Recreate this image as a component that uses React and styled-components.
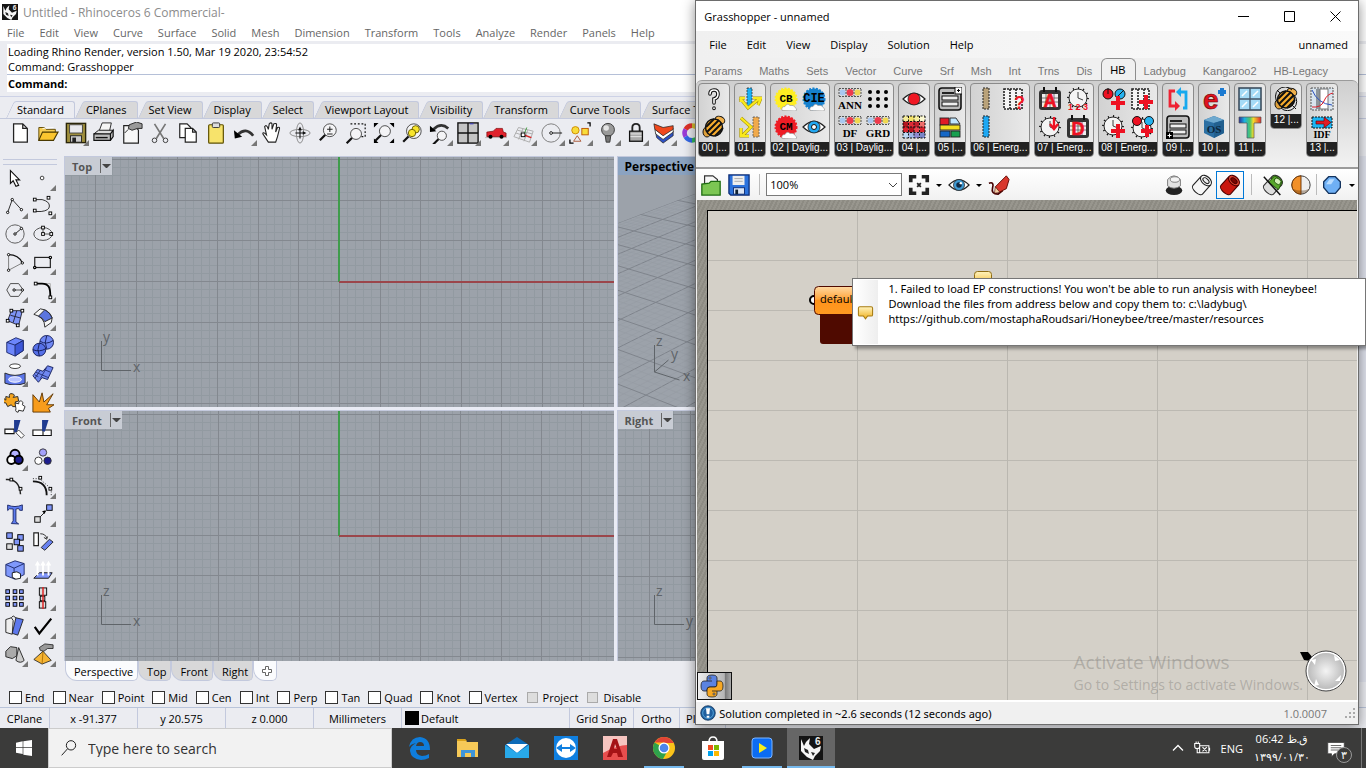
import React from "react"
import styled, { createGlobalStyle, css } from "styled-components"

const ui = `"Open Sans", "Noto Sans", sans-serif`
const wide = `"Noto Sans", "Open Sans", sans-serif`
const classic = `"Liberation Sans", Arial, sans-serif`
const panel = "#ebecf1"
const rule = "#c3c9dd"

const GlobalStyle = createGlobalStyle`
	* {
		box-sizing: border-box;
	}

	body {
		margin: 0;
		overflow: hidden;
		font: 11px/15px ${ ui };
		color: #000;
	}

	button, input, select {
		font: inherit;
		color: inherit;
		margin: 0;
	}

	button {
		padding: 0;
		border: 0;
		background: none;
		white-space: nowrap;
	}
`

/* ---------- small drawing parts ---------- */

const Sq = ( { x, y, fill = "#fff", s = 3 } ) => (
	<rect x={ x - s / 2 } y={ y - s / 2 } width={ s } height={ s } fill={ fill } stroke="#000" />
)

const Dot = ( { x, y } ) => <circle cx={ x } cy={ y } r="1.3" fill="#fff" stroke="#000" />

const Lens = ( { x = 14, y = 9, r = 7 } ) => (
	<g>
		<path d={ `M${ x - r * .7 } ${ y + r * .7 }L${ x - r * .7 - 6 } ${ y + r * .7 + 6 }` } stroke="#111" strokeWidth="2.4" />
		<circle cx={ x } cy={ y } r={ r } fill="#f4f4f6" stroke="#444" />
	</g>
)

const Clock = ( { x = 12, y = 12, r = 9 } ) => (
	<g fill="none" stroke="#111">
		<circle cx={ x } cy={ y } r={ r } fill="#f4f4f4" strokeWidth=".9" />
		<circle cx={ x } cy={ y } r={ r + 1 } strokeWidth="1.8" strokeDasharray="1.2 4" />
		<path d={ `M${ x } ${ y - r + 3 }V${ y }L${ x + 5 } ${ y + 2 }` } strokeWidth=".8" />
	</g>
)

const Plus = ( { x = 17, y = 17, c = "#ee1122", s = 5 } ) => (
	<path d={ `M${ x } ${ y - s }v${ s * 2 }M${ x - s } ${ y }h${ s * 2 }` } stroke={ c } strokeWidth="4" />
)

const Calendar = ( { letter } ) => (
	<g>
		<rect x="1" y="3" width="22" height="20" rx="3" fill="#333" />
		<rect x="4" y="7" width="16" height="13" fill="#eee" />
		<path d="M6 0v5M18 0v5" stroke="#111" strokeWidth="2" />
		<path d="M4 11h16M4 15h16M8 7v13M12 7v13M16 7v13" stroke="#555" strokeWidth=".8" />
		<text x="12" y="20" textAnchor="middle" fontFamily="Liberation Sans" fontWeight="700" fontSize="18" fill="#ee1122" stroke="#ee1122" strokeWidth=".6">{ letter }</text>
	</g>
)

const Ball = ( { letters, c } ) => (
	<g>
		<circle cx="12" cy="12" r="10.5" fill={ c } stroke={ c } strokeWidth="2" strokeDasharray="2 1.4" />
		<text x="12" y="15" textAnchor="middle" fontFamily="Liberation Mono" fontWeight="700" fontSize={ letters.length > 2 ? 12 : 11 }>{ letters }</text>
		<path d="M8 23.500q-1-4 3-4q2-4 5-1q4-1 5 2q3 1 1 3.500z" fill="#fff" stroke="#999" strokeWidth=".7" />
	</g>
)

const Swatches = ( { letters } ) => (
	<g>
		<path d="M1 2h22v7H1z" fill="#ddd" />
		<circle cx="4.500" cy="5.500" r="3" fill="#a9c8f0" />
		<circle cx="12" cy="5.500" r="3.500" fill="#ee3b4d" />
		<circle cx="19.500" cy="5.500" r="3" fill="#f0d850" />
		<path d="M1 1.500h22M1 9.500h22M1 2v7M8 2v7M16 2v7M23 2v7" stroke="#555" strokeDasharray="2 1" fill="none" />
		<text x="12" y="22" textAnchor="middle" fontFamily="Liberation Serif" fontWeight="700" fontSize="11">{ letters }</text>
	</g>
)

const Sheet = ( { badge } ) => (
	<g>
		<rect x="1" y="1" width="22" height="22" rx="3" fill="#bbb" stroke="#111" strokeWidth="1.6" />
		<path d="M4 6h12" stroke="#222" strokeWidth="2" />
		<rect x="4" y="9" width="16" height="4" fill="#eee" stroke="#111" />
		<rect x="4" y="15" width="16" height="4" fill="#eee" stroke="#111" />
		{ badge === "top" ? <g><rect x="17" y="0" width="7" height="7" fill="#fff" stroke="#111" /><path d="M20.500 2v3M19 3.500h3" stroke="#000" /></g> : <g><rect x="0" y="17" width="7" height="7" fill="#000" /><path d="M3.500 18.500v4M1.500 20.500h4" stroke="#fff" /></g> }
	</g>
)

const Bee = ( { ring } ) => (
	<g>
		<ellipse cx="18" cy="5" rx="5" ry="3.500" fill="#f0b04a" stroke="#111" transform="rotate(25 18 5)" />
		<ellipse cx="5" cy="17" rx="4" ry="5" fill="#e0a13a" stroke="#111" />
		<circle cx="12" cy="12.500" r="8.500" fill="#f7ac2e" stroke="#111" strokeWidth="1.500" />
		<path d="M4 12l8-8M5 17L17 5M8 20L20 8M13 21l8-8" stroke="#111" strokeWidth="2" />
		{ ring && <path d="M4 16a9 9 0 0 1 14-13M20 8a9 9 0 0 1-13 13M3 3l3 3M18 18l4 4" fill="none" stroke="#111" /> }
	</g>
)

const Eye = ( { c } ) => (
	<g>
		<path d="M1 12Q12 1 23 12Q12 23 1 12Z" fill="#fff" stroke="#222" strokeWidth="1.200" />
		<circle cx="12" cy="12" r="6" fill={ c } stroke="#222" strokeWidth=".8" />
	</g>
)

const Tile = ( { x, y, w = 6, c = "#7f95f8" } ) => (
	<rect x={ x } y={ y } width={ w } height={ w } fill={ c } stroke="#000" />
)

const Pipe = ( { body, top, hole, line } ) => (
	<g stroke={ line } strokeWidth="1.200" transform="rotate(42 12 12)">
		<path d="M5 6v13a7 3.500 0 0 0 14 0V6" fill={ body } />
		<ellipse cx="12" cy="5.500" rx="7" ry="4.500" fill={ top } />
		<ellipse cx="12" cy="5.500" rx="4" ry="2.200" fill={ hole } />
	</g>
)

const RhinoMark = () => (
	<g>
		<rect width="24" height="24" fill="#141414" />
		<path d="M2 3l3 7 2-4 4-4-1 6 5 5 7-3-1 5-5 5-2 4-6-3-6-6z" fill="#f4f4f4" />
		<path d="M5 12l4 2 1 4-4-2zM12 16l4 1-2 3z" fill="#222" />
		<text x="16" y="9" fontFamily="Liberation Sans" fontWeight="700" fontSize="10" fill="#eee">6</text>
	</g>
)

const CurvePath = "M3 4h6c7 0 9 4 9 14"
const heatColours = [ "#f5ec9a", "#f2e268", "#f6ef9d", "#fbf8d0", "#b3141f", "#e02a36", "#c21f2c", "#ef6d6a", "#d9222e", "#b8121e", "#e8434d", "#d9222e", "#bcd8f4", "#9fb7e8", "#8d8bd0", "#7a86c8" ]

const art = {
	/* Rhino standard toolbar */
	newFile: <path d="M5 2h10l5 5v15H5zM15 2v5h5" fill="#fff" stroke="#222" strokeWidth="1.400" />,
	open: <g><path d="M2 20V6h6l2 2h10v3" fill="#f6cd53" stroke="#5b4500" /><path d="M2 20l4-9h17l-5 9z" fill="#fbc52f" stroke="#4a3900" strokeWidth="1.200" /><path d="M6 7l12-1" stroke="#fff" /></g>,
	save: <g><rect x="1.500" y="1.500" width="21" height="21" fill="#9d8d3c" stroke="#2a2509" strokeWidth="1.500" /><rect x="5" y="3" width="14" height="9" fill="#e9e9ec" stroke="#444" /><rect x="6" y="15" width="12" height="7" fill="#ccc" stroke="#222" /><rect x="8" y="17" width="4" height="5" fill="#222" /></g>,
	print: <g><path d="M7 9l3-8h10l-2 9" fill="#f5f5f5" stroke="#222" /><path d="M1 13l5-4h16l-3 5z" fill="#ddd" stroke="#111" /><path d="M1 13h18v7H1zM19 13l3-4v7l-3 4" fill="#bbb" stroke="#111" strokeWidth="1.300" /><path d="M3 17h13" stroke="#111" strokeWidth="1.500" /></g>,
	props: <g><path d="M3 4h12l4 5v14H3z" fill="#f7f7f7" stroke="#222" strokeWidth="1.300" /><path d="M9 3l8-3 6 2v5h-5l-6 2-4-2z" fill="#999" stroke="#222" /><path d="M8 8l-4 4" stroke="#222" /></g>,
	cut: <g fill="none" stroke="#333"><path d="M6 2l10 16M18 2L8 18" stroke="#777" strokeWidth="1.800" /><circle cx="6" cy="20" r="2.500" /><circle cx="18" cy="20" r="2.500" /></g>,
	copy: <g fill="#fff" stroke="#222" strokeWidth="1.300"><path d="M3 2h8l4 4v11H3z" /><path d="M9 7h8l4 4v11H9zM17 7v4h4" /></g>,
	paste: <g><rect x="4" y="3" width="16" height="20" rx="1" fill="#f7e36b" stroke="#5e5000" strokeWidth="1.300" /><rect x="8" y="1" width="8" height="5" rx="1" fill="#ddd" stroke="#333" /></g>,
	undo: <g><path d="M5 14Q14 5 22 15" fill="none" stroke="#333" strokeWidth="3" /><path d="M1 9l1 9 8-2z" /></g>,
	pan: <path d="M8 22l-6-9q0-3 4 1L4 5q2-3 4 3l1-6q2-2 3 0v6l2-6q3-1 3 1l-1 8 2-5q3-1 2 2l-2 8-2 6z" fill="#fff" stroke="#222" strokeWidth="1.200" />,
	rotate: <g fill="none" stroke="#888"><ellipse cx="12" cy="12" rx="11" ry="4" /><ellipse cx="12" cy="12" rx="4" ry="11" /><path d="M12 8v10M7 12h10" stroke="#111" strokeWidth="1.200" /><path d="M12 5l-2 4h4zM19 12l-4-2v4z" fill="#111" stroke="none" /></g>,
	zoomDyn: <g><Lens /><path d="M11 8h6M14 5v6M11 13h6" stroke="#222" strokeWidth="1.100" /></g>,
	zoomWin: <g><Lens x={ 12 } y={ 13 } r={ 6 } /><path d="M6 2h16v14h-4" fill="none" stroke="#111" strokeDasharray="2 2" strokeWidth="1.300" /></g>,
	zoomExt: <g><Lens x={ 13 } y={ 10 } r={ 6 } /><path d="M1 1h5l-5 5zM23 1v5l-5-5zM1 23v-5l5 5zM23 23h-5l5-5z" /></g>,
	zoomSel: <g><Lens x={ 14 } y={ 10 } r={ 8 } /><circle cx="16" cy="8" r="4" fill="#f8e52c" stroke="#675b00" /><circle cx="12" cy="12" r="4" fill="#f8e52c" stroke="#675b00" /></g>,
	undoView: <g><Lens x={ 14 } y={ 15 } r={ 5 } /><path d="M5 8q8-8 16-1" fill="none" stroke="#333" strokeWidth="3" /><path d="M1 4v7l7-1z" /></g>,
	viewports: <g><rect x="1" y="1" width="22" height="22" fill="#c4c4c4" stroke="#111" strokeWidth="1.500" /><path d="M12 1v22M1 12h22" stroke="#111" strokeWidth="1.500" /><path d="M14 2h4" stroke="#33c" /></g>,
	car: <g><path d="M0 17h24" stroke="#bbb" /><path d="M2 11l7-1 3-3h7l1 4 3 1v4H2z" fill="#e0222d" stroke="#700" strokeWidth=".7" /><circle cx="6" cy="16" r="2.200" /><circle cx="18" cy="16" r="2.200" /></g>,
	cplane: <g fill="none" stroke="#aaa"><path d="M6 6l16 4-4 12L1 16zM5 9l16 4M3 12l16 5M11 7L6 19M16 9l-4 12" /><path d="M12 14l3-8" stroke="#393" /><path d="M12 14l8 3" stroke="#d22" strokeWidth="1.500" /><rect x="9" y="12" width="4" height="4" fill="#fff" stroke="#000" /></g>,
	circleSet: <g fill="none" stroke="#777"><circle cx="11" cy="12" r="10" /><path d="M12 12h11" stroke="#111" /><circle cx="11" cy="12" r="1.500" fill="#fff" stroke="#111" /></g>,
	select: <g><circle cx="7" cy="9" r="4" fill="#f8dc3a" stroke="#c80" /><rect x="14" y="7" width="7" height="7" fill="#f8dc3a" stroke="#b50" /><path d="M9 15l4 6H5z" fill="none" stroke="#a53" /><path d="M20 1h3v4M1 19v4h4" stroke="#000" fill="none" strokeWidth="1.400" /></g>,
	bulb: <g><circle cx="12" cy="8.500" r="7" fill="#999" stroke="#333" /><path d="M9 15h6l-1 7h-4z" fill="#777" stroke="#333" /><circle cx="10" cy="6.500" r="3" fill="#e5e5e5" /></g>,
	lock: <g><path d="M8 11V6q0-4 4-4t4 4v5" fill="none" stroke="#222" strokeWidth="2" /><rect x="5" y="10" width="14" height="11" fill="#aaa" stroke="#111" strokeWidth="1.400" /><path d="M6 13h12M6 16h12" stroke="#eee" /></g>,
	layers: <g stroke="#222" strokeWidth=".8"><path d="M3 12l8 6 11-8v5l-11 8-7-6z" fill="#2e51c4" /><path d="M2 8l9 6 11-7v4l-11 8-8-6z" fill="#fff" /><path d="M1 2l10 4 11-2v4l-11 7-9-7z" fill="#f0481d" /></g>,
	wheel: <g fill="none" strokeWidth="5"><path d="M12 4a8 8 0 0 1 7 4" stroke="#d8c030" /><path d="M5 8a8 8 0 0 1 7-4" stroke="#e0322a" /><path d="M5 16a8 8 0 0 1 0-8" stroke="#9b3bd8" /><path d="M12 20a8 8 0 0 1-7-4" stroke="#3468e8" /><path d="M12 20a8 8 0 0 0 7-12" stroke="#30b860" /></g>,

	/* Rhino side toolbar */
	pointer: <path d="M7 4v14l3-3 3 6 3-1-3-6h4z" fill="#fff" stroke="#111" strokeWidth="1.200" />,
	point: <circle cx="11" cy="12" r="2" fill="#fff" stroke="#333" />,
	polyline: <g fill="none" stroke="#222"><path d="M4 19L9 5l10 11" /><Dot x={ 4 } y={ 19 } /><Dot x={ 9 } y={ 5 } /><Dot x={ 19 } y={ 16 } /></g>,
	curve: <g fill="none" stroke="#222"><path d="M3 5h8q8 2 8 7t-9 6H3" /><Sq x={ 3 } y={ 5 } /><Sq x={ 18 } y={ 3 } /><Sq x={ 3 } y={ 17 } /><Sq x={ 20 } y={ 20 } /></g>,
	circle: <g fill="none" stroke="#555"><circle cx="12" cy="12" r="10" /><path d="M12 12l7-6" stroke="#111" /><Dot x={ 12 } y={ 12 } /><Dot x={ 19 } y={ 6 } /></g>,
	ellipse: <g fill="none" stroke="#444"><ellipse cx="12" cy="12" rx="10" ry="7" /><path d="M12 5v7h9" /><Sq x={ 12 } y={ 5 } /><Sq x={ 12 } y={ 12 } /><Sq x={ 21 } y={ 12 } /></g>,
	arc: <g fill="none" stroke="#777"><path d="M5 21V4M5 21l15-8" /><path d="M5 4q11 0 15 9" stroke="#111" strokeWidth="1.400" /><Dot x={ 5 } y={ 4 } /><Dot x={ 5 } y={ 21 } /><Dot x={ 20 } y={ 13 } /></g>,
	rect: <g fill="none" stroke="#222" strokeWidth="1.300"><rect x="3" y="7" width="17" height="11" /><Dot x={ 20 } y={ 7 } /><Dot x={ 3 } y={ 18 } /></g>,
	polygon: <g fill="none" stroke="#444"><path d="M7 5h9l5 7-5 7H7l-4-7z" /><path d="M11 12h9" /><Dot x={ 11 } y={ 12 } /><Dot x={ 20 } y={ 12 } /></g>,
	fillet: <g fill="none"><path d="M8 5h12v9" stroke="#aaa" /><path d={ CurvePath } stroke="#000" strokeWidth="2" transform="translate(2 1)" /><Sq x={ 4 } y={ 5 } /><Sq x={ 20 } y={ 20 } /></g>,
	surfPts: <g stroke="#223"><path d="M8 4h12l-4 16L4 15z" fill="#7f95f8" /><path d="M14 4l-4 13M7 9l11 3" /><Sq x={ 8 } y={ 4 } /><Sq x={ 20 } y={ 4 } /><Sq x={ 4 } y={ 15 } /><Sq x={ 15 } y={ 20 } /></g>,
	loft: <g stroke="#222"><path d="M2 8l7-6q10 1 13 10l-1 5-7 5q0-11-12-14z" fill="#f6f6f6" /><path d="M7 10l7-7q6 3 8 9l-8 4q-2-4-7-6z" fill="#5b75df" /></g>,
	box: <g stroke="#1b2768"><path d="M3 8l10-5 8 3v11l-9 6-9-4z" fill="#6c86fb" /><path d="M3 8l9 3 9-5" fill="none" /><path d="M12 11v12l9-6V6z" fill="#3d57d8" /></g>,
	spheres: <g stroke="#111a55"><circle cx="16" cy="8" r="7.500" fill="#7088f4" /><path d="M9 7q7 4 14-1M16 1q-3 7 0 14" fill="none" /><circle cx="8" cy="16" r="7" fill="#5670e8" /><path d="M1 16q7 3 14-1M8 9q-3 7 0 14" fill="none" /></g>,
	cylinder: <g><ellipse cx="12" cy="3.500" rx="6" ry="2.500" fill="#fff" stroke="#333" /><path d="M1 11q11 5 22 0v11q-11 4-22 0z" fill="#5b75e8" stroke="#222" /><ellipse cx="12" cy="18" rx="7" ry="3" fill="#b9c4ff" stroke="#fff" /></g>,
	mesh: <g stroke="#16205c"><path d="M1 14l5-7 6 2 5-6 6 2-6 13-6-2-4 5z" fill="#7088f0" /><path d="M3 17l6-9M9 17l7-12M4 10l14 6M3 13l4 2M13 7l7 3" fill="none" strokeWidth=".8" /></g>,
	puzzle: <g stroke="#222"><path d="M2 6l4 1q-1-5 3-4t1 4l5-1 1 5-4 1q3 4 0 5t-4-2l-4 2-2-4q-4 0-3-3t3 0z" fill="#f5a51f" /><path d="M12 13l4 1q0-4 3-3t1 4l3 2-2 5-5-1q0 3-2 2t-1-4z" fill="#fff" /></g>,
	explode: <path d="M1 4l7 8 3-10 2 10L23 3l-7 12 8 0-6 4 2 4H1z" fill="#f79c1c" stroke="#5d3500" />,
	trim: <g stroke="#111" strokeWidth="1.200"><path d="M1 11h10v5H1z" fill="#fff" /><path d="M11 1h7l-4 14-3-1z" fill="#1f3b90" stroke="none" /><path d="M13 15l3-3 6 6-3 3z" fill="#fff" strokeWidth=".8" /></g>,
	split: <g stroke="#111" strokeWidth="1.200"><path d="M1 12h20v6H1z" fill="#fff" /><path d="M12 18v-6" /><path d="M11 1h7l-4 13-3-1z" fill="#1f3b90" stroke="none" /></g>,
	group: <g stroke="#000" strokeWidth="2"><circle cx="12" cy="8" r="5" fill="#b3b1ff" /><circle cx="8" cy="14" r="4.500" fill="#fff" /><circle cx="16" cy="14" r="4.500" fill="#1d1d8e" /></g>,
	ungroup: <g stroke="#333"><circle cx="12" cy="6" r="4" fill="#a4a1fb" /><circle cx="7" cy="15" r="4" fill="#fff" /><circle cx="17" cy="15" r="4" fill="#1d1d8e" /></g>,
	editPts: <g fill="none" stroke="#222"><path d="M2 5q15-1 16 16" strokeWidth="1.600" /><Sq x={ 8 } y={ 5 } /><Sq x={ 18 } y={ 15 } /></g>,
	ctrlPts: <g fill="none" stroke="#111"><path d="M1 7q15 0 15 15" strokeWidth="2" /><path d="M1 4h7l13 11v8" strokeDasharray="1 2" /><Sq x={ 9 } y={ 3 } /><Sq x={ 20 } y={ 15 } /></g>,
	text: <path d="M4 2q8 3 16-1v6h-3l-1-2-3 1v14l3 2H8l2-3V6L6 6 4 8z" fill="#5d7cf0" stroke="#1b2768" transform="skewY(3)" />,
	move: <g><path d="M9 15l6-6" stroke="#111" /><path d="M15 8l-4 1 3 3z" /><Tile x={ 3 } y={ 15 } c="#ddd" /><Tile x={ 16 } y={ 2 } /></g>,
	array: <g><Tile x={ 3 } y={ 2 } /><Tile x={ 15 } y={ 4 } /><Tile x={ 11 } y={ 9 } /><Tile x={ 3 } y={ 14 } c="#ddd" /><Tile x={ 15 } y={ 16 } /></g>,
	orient: <g stroke="#222"><path d="M2 2h5v14H2z" fill="#fff" strokeWidth="1.300" /><path d="M9 3q6 0 7 5m-3-1l3 2 1-3" fill="none" /><path d="M10 18L19 9l4 3-9 9z" fill="#6780ef" /></g>,
	boolean: <g stroke="#1b2768"><path d="M2 6l10-4 10 3v12l-10 5-10-4z" fill="#7f98fb" /><path d="M2 6l9 4 11-5M11 10v12" fill="none" /><path d="M9 15l5-1 4 2v5l-5 1-4-2z" fill="#fff" stroke="#111" /></g>,
	extrude: <g><path d="M2 21l6-6h14l-4 6z" fill="#7f95f8" stroke="#111" /><path d="M6 18V5M12 18V5M18 18V5" stroke="#fff" strokeWidth="2" /><path d="M6 2l-3 5h6zM12 2L9 7h6zM18 2l-3 5h6z" fill="#fff" /></g>,
	grid9: <g>{ [ 2, 10, 17 ].map( x => [ 3, 10, 17 ].map( y => <Tile key={ `${ x }-${ y }` } x={ x } y={ y } w={ 4 } /> ) ) }</g>,
	align: <g><Tile x={ 8 } y={ 1 } w={ 8 } c="#ddd" /><Tile x={ 9 } y={ 10 } w={ 5 } c="#ddd" /><Tile x={ 8 } y={ 16 } w={ 7 } c="#ddd" /><path d="M12 0v24" stroke="#d22" strokeWidth="1.600" /></g>,
	bend: <g stroke="#222"><path d="M2 5l6-2 2 3-1 15-7-2z" fill="#eee" /><path d="M13 3l8 2-6 17-6-2z" fill="#5d78ec" /><path d="M8 3l2-2 3 2" fill="none" /></g>,
	check: <path d="M3 13l5 7L21 4" fill="none" stroke="#000" strokeWidth="2.400" />,
	solids: <g stroke="#222"><path d="M2 9l5-5 7 1v9l-5 3-7-2z" fill="#aaa" /><path d="M16 5l6 14q-4 4-9 0z" fill="#ccc" /></g>,
	hand: <g stroke="#222" strokeWidth=".9"><path d="M12 9l9 10-10 4-9-5z" fill="#f6b535" /><path d="M12 9l-1 14" stroke="#a66a00" /><path d="M8 5l6-4 9 1v4h-6l-4 3-4-1z" fill="#999" /></g>,

	/* Grasshopper ribbon */
	help: <g fill="none" strokeLinecap="round"><path d="M8 7q0-4 4-4t4 4-4 5v4M12 21v.5" stroke="#111" strokeWidth="3.600" /><path d="M8 7q0-4 4-4t4 4-4 5v4M12 21v.5" stroke="#fff" strokeWidth="1.600" /></g>,
	bee: <Bee />,
	beeRing: <Bee ring />,
	down: <g><rect x="9" y="1" width="5" height="18" fill="#1ab0f5" stroke="#333" strokeWidth=".8" strokeDasharray="2 1" /><path d="M2 11l8 10L22 11M15 11h8l-3 7M3 15v-4h4" fill="none" stroke="#a89500" strokeWidth="3.200" /><path d="M2 11l8 10L22 11M15 11h8l-3 7M3 15v-4h4" fill="none" stroke="#fae91c" strokeWidth="2.200" /></g>,
	side: <g><rect x="15" y="2" width="6" height="20" fill="#f0a94b" stroke="#555" strokeWidth=".8" strokeDasharray="2 1" /><path d="M3 3l10 9-9 9M3 13v8h8" fill="none" stroke="#a89500" strokeWidth="3.200" /><path d="M3 3l10 9-9 9M3 13v8h8" fill="none" stroke="#fae91c" strokeWidth="2.200" /></g>,
	cb: <Ball letters="CB" c="#ffee22" />,
	cie: <Ball letters="CIE" c="#1581cf" />,
	cm: <Ball letters="CM" c="#ee1c25" />,
	eyeBlue: <g><Eye c="#22a7f0" /><circle cx="12" cy="12" r="2.500" fill="#fff" stroke="#111" /></g>,
	ann: <Swatches letters="ANN" />,
	df: <Swatches letters="DF" />,
	grd: <Swatches letters="GRD" />,
	dots: <g>{ [ 4, 12, 20 ].map( x => [ 5, 12, 19 ].map( y => <circle key={ `${ x }-${ y }` } cx={ x } cy={ y } r="2" /> ) ) }</g>,
	eyeRed: <Eye c="#f01824" />,
	heat: <g>{ heatColours.map( ( c, i ) => <rect key={ i } x={ 1 + i % 4 * 5.5 } y={ 1 + Math.floor( i / 4 ) * 5.5 } width="5.500" height="5.500" fill={ c } /> ) }<path d="M1 1h22M1 6.500h22M1 12h22M1 17.500h22M1 23h22M1 1v22M6.500 1v22M12 1v22M17.500 1v22M23 1v22" stroke="#111" strokeDasharray="2 1.500" /></g>,
	sheetTop: <Sheet badge="top" />,
	sheetLow: <Sheet badge="low" />,
	blocks: <g stroke="#222" strokeWidth=".9"><rect x="2" y="3" width="9" height="7" fill="#e01b26" /><path d="M12 3h6l4 6H12z" fill="#bfe6ff" /><rect x="2" y="10" width="20" height="5" fill="#f3df22" /><rect x="2" y="16" width="10" height="6" fill="#1567c6" /><rect x="13" y="16" width="9" height="6" fill="#18a050" /></g>,
	slabTan: <g><rect x="9" y="1" width="6" height="21" fill="#b9a27a" /><rect x="9" y="1" width="6" height="21" fill="none" stroke="#222" strokeDasharray="2 1" /></g>,
	slabBlue: <g><rect x="9" y="1" width="6" height="21" fill="#1ea7f2" /><rect x="9" y="1" width="6" height="21" fill="none" stroke="#222" strokeDasharray="2 1" /></g>,
	wallAsk: <g><path d="M2 2h18v20H2zM8 2v20M14 2v20" fill="#f4f4f4" stroke="#222" strokeDasharray="2 1" strokeWidth="1.600" /><text x="12" y="22" fontFamily="Liberation Sans" fontWeight="700" fontSize="18" fill="#f01824">?</text></g>,
	calA: <Calendar letter="A" />,
	calD: <Calendar letter="D" />,
	clockNum: <g><Clock y={ 11 } /><text x="12" y="23" textAnchor="middle" fontFamily="Liberation Sans" fontWeight="700" fontSize="9" fill="#ee1122">1 2 3</text></g>,
	clockDown: <g><Clock /><path d="M16 2v12M12 9l4 5 4-5" fill="none" stroke="#ee1122" strokeWidth="2.400" /></g>,
	dialPlus: <g><circle cx="6" cy="7" r="5" fill="#ee1122" stroke="#111" /><circle cx="18" cy="7" r="5" fill="#25b2ef" stroke="#111" /><path d="M6 1v6M14 11l8-8" stroke="#111" /><Plus x={ 16 } y={ 16 } s={ 7 } /></g>,
	wallPlus: <g><path d="M2 2h17v20H2zM8 2v20M14 2v20" fill="#f4f4f4" stroke="#222" strokeDasharray="2 1" strokeWidth="1.600" /><Plus x={ 16 } y={ 15 } s={ 7 } /></g>,
	clockPlus: <g><Clock x={ 11 } y={ 11 } /><Plus x={ 16 } y={ 16 } s={ 7 } /></g>,
	allPlus: <g><Clock y={ 13 } /><circle cx="7" cy="6" r="4.500" fill="#ee1122" stroke="#111" /><circle cx="19" cy="6" r="4.500" fill="#25b2ef" stroke="#111" /><Plus x={ 17 } y={ 16 } s={ 6 } /></g>,
	cycle: <g fill="none" strokeWidth="2.800"><path d="M9 4H4v15h5" stroke="#ee2233" /><path d="M17 21h3V5h-5" stroke="#16a9ee" /><path d="M9 14l5 5-5 5z" fill="#ee2233" stroke="none" /><path d="M15 0v10l-5-5z" fill="#16a9ee" stroke="none" /></g>,
	ePlus: <g><text x="1" y="22" fontFamily="Liberation Sans" fontWeight="700" fontSize="28" fill="#e1131f" stroke="#600" strokeWidth=".6">e</text><Plus x={ 20 } y={ 5 } c="#1b7ad1" s={ 4 } /></g>,
	openStudio: <g><path d="M2 5l10-4 10 4v13l-10 5-10-5z" fill="#2b6fa3" /><path d="M2 5l10 3 10-3-10-4z" fill="#6ea9cf" /><path d="M12 8v15l10-5V5z" fill="#22608f" /><text x="12" y="18" textAnchor="middle" fontFamily="Liberation Serif" fontWeight="700" fontSize="11" fill="#0c2840">OS</text></g>,
	glass: <g><rect x="1" y="1" width="22" height="22" fill="#a5dbf6" stroke="#345" strokeWidth="1.500" /><path d="M12 1v22M1 12h22" stroke="#456" strokeWidth="1.300" /><path d="M4 9l5-5M15 9l5-5M4 20l5-5M15 20l5-5" stroke="#fff" strokeWidth="1.500" /></g>,
	therm: <g><linearGradient id="heatRamp" gradientUnits="userSpaceOnUse" x1="1" x2="23" y1="0" y2="0"><stop stopColor="#2c2f96" /><stop offset=".25" stopColor="#1bb0e0" /><stop offset=".5" stopColor="#4fc46a" /><stop offset=".65" stopColor="#f4dc2c" /><stop offset="1" stopColor="#e4282c" /></linearGradient><path d="M1 2h22v6h-7v15H9V8H1z" fill="url(#heatRamp)" stroke="#555" strokeWidth=".7" /></g>,
	graph: <g fill="none"><rect x="1" y="1" width="22" height="22" fill="#d8e4ee" stroke="#555" strokeDasharray="2 1" /><rect x="6" y="2" width="4" height="20" fill="#8c949b" /><rect x="10" y="2" width="8" height="20" fill="#fff" stroke="#777" /><path d="M2 3q6 14 20 15" stroke="#2a50c0" /><path d="M2 20q9 1 12-6t9-8" stroke="#e01b26" /></g>,
	idf: <g><path d="M2 2h20v11H2z" fill="#1db3f0" stroke="#111" strokeDasharray="2 1" /><path d="M6 6h8V2l7 5.500-7 5.500V9H6z" fill="#e01b26" stroke="#500" strokeWidth=".6" /><text x="12" y="23" textAnchor="middle" fontFamily="Liberation Serif" fontWeight="700" fontSize="10">IDF</text></g>,

	/* Grasshopper canvas toolbar */
	ghOpen: <g><path d="M5 12V2h9l5 4v8" fill="#f8f8f8" stroke="#333" strokeWidth="1.300" /><path d="M2 23V11l8-1 2-2h10v15z" fill="#7cc653" stroke="#1d6b10" strokeWidth="1.400" /></g>,
	ghSave: <g><path d="M1 1h22v22H3l-2-2z" fill="#2b72dd" stroke="#0b2b74" strokeWidth="1.400" /><rect x="5" y="2" width="13" height="10" fill="#eee" /><path d="M7 5h9M7 8h9" stroke="#aaa" /><rect x="6" y="15" width="12" height="7" fill="#dce6f5" stroke="#0b2b74" /><rect x="8" y="17" width="3" height="5" fill="#123" /></g>,
	extents: <g fill="none" stroke="#222" strokeWidth="4"><path d="M3 9V3h6M15 3h6v6M21 15v6h-6M9 21H3v-6" /><path d="M10 10l4 4M14 10l-4 4" strokeWidth="2" /></g>,
	eyeGh: <g><Eye c="#3f9bd4" /><circle cx="12" cy="12" r="3" fill="#0f2842" /><circle cx="14" cy="10" r="1.300" fill="#fff" /></g>,
	sketch: <g><path d="M1 10q6-2 4 5t6 7l5-4" fill="none" stroke="#400" strokeWidth="1.800" /><path d="M8 14L20 2l3 4-3 10-8 4z" fill="#d9382e" stroke="#5d0800" /><path d="M8 14l-1 7 6-1z" fill="#f4cfa5" stroke="#4d0800" strokeWidth=".7" /></g>,
	hidden: <g><path d="M5 7l14-2v8H5z" fill="#ddd" /><ellipse cx="12" cy="18" rx="9" ry="5" fill="#222" /><path d="M5 6q7-8 14 0v7q-7 5-14 0z" fill="#e2e2e2" stroke="#777" /><ellipse cx="13" cy="6" rx="5" ry="3" fill="#f4f4f4" stroke="#777" /></g>,
	wire: <Pipe body="#f6f6f6" top="#fff" hole="#eee" line="#222" />,
	shaded: <Pipe body="#c9170f" top="#e0452f" hole="#7b0500" line="#4d0000" />,
	selected: <g><Pipe body="#ddd" top="#58a82a" hole="#c5e8a0" line="#333" /><path d="M7 9l7-7 8 6-4 9z" fill="#58a82a" stroke="#24580c" /><ellipse cx="17" cy="8" rx="4" ry="3" fill="#d2f0b6" stroke="#24580c" transform="rotate(40 17 8)" /><path d="M2 3l18 20" stroke="#111" strokeWidth="1.600" /></g>,
	half: <g><circle cx="12" cy="12" r="10" fill="#eee" stroke="#333" /><path d="M12 2a10 10 0 0 0 0 20z" fill="#f1902a" stroke="#6a3000" /><path d="M3 16a10 10 0 0 0 18 0q-9 4-18 0z" fill="#5a3a1a" opacity=".4" /></g>,
	octagon: <g><path d="M8 2h8l6 6v7l-6 7H8l-6-7V8z" fill="#6fb0f5" stroke="#13335e" strokeWidth="1.600" /><path d="M9 5l6 0-4 6-6 0z" fill="#b8dcff" /></g>,
	bubble: <path d="M4 4h16q2 0 2 2v9q0 2-2 2h-5l-3 4-3-4H4q-2 0-2-2V6q0-2 2-2z" fill="url(#amber)" stroke="#a67b12" strokeWidth="1.500" />,
	info: <g><circle cx="12" cy="12" r="11" fill="#1f5f9e" stroke="#06294f" /><circle cx="12" cy="12" r="8" fill="none" stroke="#6dc1f2" /><path d="M9 5h6l-1 9h-4zM10 16h4v3h-4z" fill="#fff" /></g>,
	python: <g stroke="#222" strokeWidth=".8"><path d="M7 7V4q0-3 5-3t5 3v7q0 2-3 2H9q-2 0-2 3v1H4q-3 0-3-5t3-5h8" fill="#5b83e0" /><path d="M17 17v3q0 3-5 3t-5-3v-4q0-3 3-3h5q2 0 2-3V7h3q3 0 3 5t-3 5h-8" fill="#f7a823" /><circle cx="10" cy="4" r="1" fill="#fff" /><circle cx="14" cy="20" r="1" fill="#fff" /></g>,

	/* taskbar */
	windows: <path d="M0 4l10-2v9H0zM11 2l13-2v11H11zM0 12h10v9L0 19zM11 12h13v12l-13-2z" fill="#fff" />,
	search: <g fill="none" stroke="#222" strokeWidth="1.500"><circle cx="15" cy="8" r="7" /><path d="M10 13L1 23" /></g>,
	edge: <path d="M2 11Q4 1 13 1q10 1 10 13H9q0 5 6 6 4 0 7-2v4q-4 2-8 2Q4 23 3 15q0-5 6-8Q4 8 2 11zM9 10h8q0-4-4-4-3 0-4 4z" fill="#0f7ddb" />,
	files: <g><path d="M1 3h8l2 3h11v15H1z" fill="#f6c958" /><path d="M1 3h8l2 2H1z" fill="#d9a21b" /><path d="M5 21v-7h14v7h-4v-4H9v4z" fill="#3f95d9" /></g>,
	mail: <g><path d="M0 9l12-8 12 8v13H0z" fill="#0d6bb8" /><path d="M1 8h22l-11 9z" fill="#fff" /><path d="M0 9l12 8L24 9v13H0z" fill="#28a9ea" /></g>,
	team: <g><rect width="24" height="24" fill="#0f7fe0" /><circle cx="12" cy="12" r="10" fill="#fff" /><path d="M2 12l6-4v3h8V8l6 4-6 4v-3H8v3z" fill="#0f7fe0" /></g>,
	autocad: <g><rect width="24" height="24" fill="#e84e4e" /><path d="M0 0h24v9q-9 0-24 8z" fill="#f7d3cd" opacity=".9" /><path d="M10 3h4l6 18h-5l-1-4h-4l-2 4H4zM11 13h3l-2-5z" fill="#a51216" /></g>,
	chrome: <g><circle cx="12" cy="12" r="11" fill="#fbc31a" /><path d="M2.500 6.500A11 11 0 0 1 21.500 6.500H12z" fill="#e24436" /><path d="M2.500 6.500A11 11 0 0 0 11 23l5-9-4-2z" fill="#2ea24c" /><path d="M12 6.500h9.500" stroke="#e24436" /><circle cx="12" cy="12" r="5.500" fill="#fff" /><circle cx="12" cy="12" r="4.300" fill="#4c86ec" /></g>,
	store: <g><path d="M8 6q0-5 4-5t4 5" fill="none" stroke="#fff" strokeWidth="1.500" /><path d="M1 5h22v17q0 2-2 2H3q-2 0-2-2z" fill="#fff" /><rect x="7" y="9" width="5" height="5" fill="#f04e22" /><rect x="13" y="9" width="5" height="5" fill="#7fb900" /><rect x="7" y="15" width="5" height="5" fill="#00a3ee" /><rect x="13" y="15" width="5" height="5" fill="#fdb900" /></g>,
	player: <g><rect x="2" y="2" width="20" height="20" rx="3" fill="#0b6cf2" stroke="#7fb6ff" /><path d="M9 7l8 5-8 5z" fill="#f5ee1a" /></g>,
	rhino: <RhinoMark />,
	chevronUp: <path d="M2 17l10-10 10 10" fill="none" stroke="#fff" strokeWidth="2.500" />,
	battery: <g fill="none" stroke="#fff" strokeWidth="1.500"><path d="M8 8h13v10H8zM22 11v4M12 10l6 6M18 10l-6 6M1 5h7v4q0 3-3.500 3T1 9zM3 5V2M6 5V2M4.500 12v6H8" /></g>,
	notice: <path d="M1 2h22v15H10l-4 4v-4H1zM5 6h14M5 9h14M5 12h10" fill="#fff" stroke="#3c3c3b" />,
}

const Svg = styled.svg`
	display: block;
	flex: none;
	width: ${ props => props.$size }px;
	height: ${ props => props.$size }px;
`

const Icon = ( { name, size = 22 } ) => (
	<Svg $size={ size } viewBox="0 0 24 24" aria-hidden="true">{ art[ name ] }</Svg>
)

/* ---------- desktop ---------- */

const Screen = styled.div`
	display: flex;
	flex-direction: column;
	height: 100vh;
	overflow: hidden;
	background: #3a3a39;
`

const Desktop = styled.main`
	position: relative;
	display: flex;
	flex: 1;
	min-height: 0;
	overflow: hidden;
`

/* ---------- Rhino window ---------- */

const RhinoWindow = styled.section`
	display: flex;
	flex-direction: column;
	flex: 1;
	min-width: 0;
	background: ${ panel };
`

const RhinoTitle = styled.header`
	display: flex;
	align-items: center;
	gap: 5px;
	height: 24px;
	padding-left: 2px;
	background: #fff;
	color: #8c8c8c;
	font-size: 12px;
`

const RhinoMenu = styled.nav`
	display: flex;
	gap: 15px;
	height: 17px;
	padding-left: 7px;
	background: #fff;
	color: #666;
`

const Commands = styled.div`
	margin-top: 3px;
	padding-left: 7px;
	padding-bottom: 4px;
	border-bottom: 1px solid #cdd2e6;
`

const History = styled.div`
	padding-left: 1px;
	background: #fff;
	border-bottom: 1px solid #b5c0d8;
`

const Prompt = styled.label`
	display: flex;
	align-items: center;
	height: 17px;
	padding-left: 1px;
	background: #fff;
	font-weight: 700;

	input {
		flex: 1;
		height: 15px;
		border: 0;
		outline: 0;
		background: none;
	}
`

const ToolTabs = styled.div`
	display: flex;
	height: 18px;
	margin-top: 4px;
	padding-left: 4px;
	border-bottom: 1px solid ${ rule };
`

/* slanted left half and square right half */
const ToolTab = styled.button`
	position: relative;
	z-index: 0;
	padding: 0 9px 0 13px;

	&::before, &::after {
		content: "";
		position: absolute;
		z-index: -1;
		top: 0;
		bottom: 0;
		border: solid ${ rule };
		background: ${ props => props.$active ? panel : "#d8d8d9" };
	}

	&::before {
		left: 2px;
		right: 50%;
		border-width: 1px 0 0 1px;
		border-radius: 3px 0 0 0;
		transform: skewX(-25deg);
		transform-origin: 0 100%;
	}

	&::after {
		left: 40%;
		right: -2px;
		border-width: 1px 1px 0 0;
		border-radius: 0 3px 0 0;
	}
`

const ToolRow = styled.div`
	display: flex;
	height: 37px;
	padding-left: 6px;
	overflow: hidden;
`

const Tool = styled.button`
	position: relative;
	display: flex;
	flex: none;
	align-items: center;
	justify-content: center;
	width: 28px;
	height: 28px;

	${ props => props.$more && css`
		&::after {
			content: "";
			position: absolute;
			right: 1px;
			bottom: 1px;
			border: 3px solid transparent;
			border-right-color: #777;
			border-bottom-color: #777;
		}
	` }
`

const RhinoBody = styled.div`
	display: flex;
	flex: 1;
	min-height: 0;
`

const SideTools = styled.div`
	display: grid;
	grid-template-columns: 28px 28px;
	grid-template-rows: 8px;
	grid-auto-rows: 28px;
	flex: none;
	align-content: start;
	width: 64px;
	padding-left: 1px;
	overflow: hidden;

	&::before {
		content: "";
		grid-column: 1 / 3;
		height: 4px;
		margin: 3px 0 1px 2px;
		border: solid ${ rule };
		border-width: 1px 0;
	}
`

const Views = styled.div`
	display: flex;
	flex-direction: column;
	flex: 1;
	min-width: 0;
`

const ViewGrid = styled.div`
	display: grid;
	grid-template-columns: 1fr 1fr;
	grid-template-rows: 1fr 1fr;
	gap: 3px;
	flex: 1;
	min-height: 0;
	background: #e9ebf4;
`

const View = styled.section`
	position: relative;
	display: flex;
	min-width: 0;
	min-height: 0;
	border: solid ${ rule };
	border-width: 1px 0 0 1px;
	background: #9ca2aa;

	> svg {
		flex: 1;
		width: 100%;
		height: 100%;
	}
`

const ViewLabel = styled.button`
	position: absolute;
	top: 0;
	left: 0;
	display: flex;
	align-items: center;
	height: 18px;
	padding: 0 7px;
	font-size: ${ props => props.$active ? 12 : 11 }px;
	font-weight: 700;
	background: ${ props => props.$active ? "#8ba3c1" : "#c8ccd4" };
	color: ${ props => props.$active ? "#000" : "#555" };

	i {
		width: 11px;
		height: 14px;
		margin: 0 -6px 0 8px;
		border-left: 1px solid #666;

		&::after {
			content: "";
			display: block;
			margin: 5px 0 0 1px;
			border: 4px solid transparent;
			border-top-color: #444;
		}
	}
`

const RightDock = styled.aside`
	flex: none;
	width: 200px;
	background: #dfe2ec;
	border-left: 1px solid ${ rule };
`

const PageTabs = styled.div`
	display: flex;
	height: 21px;
	padding-left: 1px;
`

const PageTab = styled.button`
	height: 20px;
	padding: 1px 4px 0 8px;
	border: 1px solid ${ rule };
	border-top: 0;
	border-radius: 0 0 5px 12px;
	background: ${ props => props.$active ? "#fafbfd" : "#d8d8d9" };
`

const Snaps = styled.div`
	display: flex;
	align-items: center;
	gap: 8px;
	height: 26px;
	padding-top: 6px;
	padding-left: 9px;
	border-bottom: 1px solid #b9c4da;
`

const Snap = styled.label`
	display: flex;
	align-items: center;
	gap: 3px;

	input {
		appearance: none;
		width: 13px;
		height: 13px;
		border: 1px solid #333;
		background: #fff;
	}

	input:disabled {
		width: 11px;
		height: 11px;
		margin: 0 2px 0 1px;
		border-color: #aaa;
		background: #ddd;
	}
`

const StatusRow = styled.div`
	display: flex;
	height: 20px;
`

const StatusCell = styled.div`
	display: flex;
	flex: none;
	align-items: center;
	justify-content: ${ props => props.$start ? "flex-start" : "center" };
	gap: 2px;
	width: ${ props => props.$w }px;
	padding: 0 3px;
	border-right: 1px solid ${ rule };
	white-space: nowrap;
`

const Swatch = styled.span`
	width: 14px;
	height: 14px;
	background: #000;
`

const steps = Array.from( { length: 121 }, ( _, i ) => i - 60 )
const ordered = [ ...steps.filter( i => i % 5 ), ...steps.filter( i => i % 5 === 0 ) ]

const PlanView = ( { across, up, pitch } ) => (
	<svg aria-hidden="true">
		<svg x="50%" y="50%" overflow="visible" fill="none" shapeRendering="crispEdges">
			{ ordered.map( i => {
				const at = Math.round( i * pitch / 5 ) + .5
				return <path key={ i } d={ `M${ at } -600V600M-900 ${ at - 1 }H900` } stroke={ i % 5 ? "#929aa1" : "#83888f" } />
			} ) }
			<path d="M0 0V-600" stroke="#3f9c4c" strokeWidth="2" />
			<path d="M0 0H900" stroke="#9b464b" strokeWidth="2" />
		</svg>
		<svg y="100%" overflow="visible" fill="none" stroke="#5f6469">
			<path d="M36.500 -66V-36.500H66" />
			<g fontFamily="Open Sans" fontSize="14" fill="#5f6469" stroke="none">
				<text x="38" y="-65">{ up }</text>
				<text x="68" y="-35">{ across }</text>
			</g>
		</svg>
	</svg>
)

const PerspectiveView = () => {
	const rising = Array.from( { length: 70 }, ( _, i ) => {
		const t = i / 5
		const y = 66 + 13 * t + 1.3 * t * t
		return { i, d: `M0 ${ y }L300 ${ y - 114 - 6 * t }` }
	} )
	const falling = Array.from( { length: 90 }, ( _, i ) => {
		const t = i / 5 - 6
		const y = 70 + 16 * t + 1.7 * t * Math.abs( t )
		return { i, d: `M0 ${ y }L300 ${ y + 75 + 7 * t }` }
	} )
	return (
		<svg aria-hidden="true">
			<clipPath id="floor"><path d="M0 66L300 -48V600H0z" /></clipPath>
			<g fill="none" clipPath="url(#floor)">
				{ [ ...rising, ...falling ].map( ( line, n ) => (
					<path key={ n } d={ line.d } stroke={ line.i % 5 ? "#949aa2" : "#7f848c" } strokeWidth={ line.i % 5 ? .5 : 1 } />
				) ) }
			</g>
			<g fill="none" stroke="#5f6469">
				<path d="M36.500 188v27l25 8M36.500 215l14-12" />
				<g fontFamily="Open Sans" fontSize="14" fill="#5f6469" stroke="none">
					<text x="38" y="189">z</text>
					<text x="53" y="202">y</text>
					<text x="65" y="224">x</text>
				</g>
			</g>
		</svg>
	)
}

const rhinoMenus = [ "File", "Edit", "View", "Curve", "Surface", "Solid", "Mesh", "Dimension", "Transform", "Tools", "Analyze", "Render", "Panels", "Help" ]
const toolTabs = [ "Standard", "CPlanes", "Set View", "Display", "Select", "Viewport Layout", "Visibility", "Transform", "Curve Tools", "Surface Tools" ]
/* a trailing + marks a button that opens a fly-out */
const mainTools = "newFile open save+ print props cut copy paste undo+ pan rotate zoomDyn zoomWin zoomExt zoomSel undoView+ viewports+ car+ cplane+ circleSet+ select+ bulb+ lock+ layers+ wheel".split( " " )
const sideTools = "pointer point+ polyline+ curve+ circle+ ellipse+ arc+ rect+ polygon+ fillet+ surfPts+ loft+ box+ spheres+ cylinder+ mesh+ puzzle explode trim split group+ ungroup editPts ctrlPts+ text move+ array orient boolean+ extrude+ grid9+ align+ bend+ check+ solids+ hand+".split( " " )
const snaps = [ "End", "Near", "Point", "Mid", "Cen", "Int", "Perp", "Tan", "Quad", "Knot", "Vertex" ]

const ToolButton = ( { id } ) => {
	const name = id.replace( "+", "" )
	return <Tool aria-label={ name } $more={ id !== name }><Icon name={ name } /></Tool>
}

const Rhino = () => (
	<RhinoWindow>
		<RhinoTitle><Icon name="rhino" size={ 16 } />Untitled - Rhinoceros 6 Commercial-</RhinoTitle>
		<RhinoMenu>{ rhinoMenus.map( m => <button key={ m }>{ m }</button> ) }</RhinoMenu>
		<Commands>
			<History>Loading Rhino Render, version 1.50, Mar 19 2020, 23:54:52<br />Command: Grasshopper</History>
			<Prompt>Command: <input type="text" /></Prompt>
		</Commands>
		<ToolTabs>{ toolTabs.map( ( t, i ) => <ToolTab key={ t } $active={ i === 0 }>{ t }</ToolTab> ) }</ToolTabs>
		<ToolRow>{ mainTools.map( id => <ToolButton key={ id } id={ id } /> ) }</ToolRow>
		<RhinoBody>
			<SideTools>{ sideTools.map( id => <ToolButton key={ id } id={ id } /> ) }</SideTools>
			<Views>
				<ViewGrid>
					<View><PlanView across="x" up="y" pitch={ 40.6 } /><ViewLabel>Top<i /></ViewLabel></View>
					<View><PerspectiveView /><ViewLabel $active>Perspective</ViewLabel></View>
					<View><PlanView across="x" up="z" pitch={ 40.4 } /><ViewLabel>Front<i /></ViewLabel></View>
					<View><PlanView across="y" up="z" pitch={ 40.5 } /><ViewLabel>Right<i /></ViewLabel></View>
				</ViewGrid>
				<PageTabs>
					<PageTab $active>Perspective</PageTab>
					<PageTab>Top</PageTab>
					<PageTab>Front</PageTab>
					<PageTab>Right</PageTab>
					<PageTab $active aria-label="New page"><svg width="10" height="10"><path d="M3.500.500h3v3h3v3h-3v3h-3v-3h-3v-3h3z" fill="#fff" stroke="#666" /></svg></PageTab>
				</PageTabs>
			</Views>
			<RightDock />
		</RhinoBody>
		<Snaps>
			{ snaps.map( s => <Snap key={ s }><input type="checkbox" />{ s }</Snap> ) }
			<Snap><input type="checkbox" disabled />Project</Snap>
			<Snap><input type="checkbox" disabled />Disable</Snap>
		</Snaps>
		<StatusRow>
			<StatusCell $w={ 50 }>CPlane</StatusCell>
			<StatusCell $w={ 88 }>x -91.377</StatusCell>
			<StatusCell $w={ 88 }>y 20.575</StatusCell>
			<StatusCell $w={ 88 }>z 0.000</StatusCell>
			<StatusCell $w={ 88 }>Millimeters</StatusCell>
			<StatusCell $w={ 168 } $start><Swatch />Default</StatusCell>
			<StatusCell $w={ 64 }>Grid Snap</StatusCell>
			<StatusCell $w={ 46 }>Ortho</StatusCell>
			<StatusCell $w={ 46 }>Planar</StatusCell>
		</StatusRow>
	</RhinoWindow>
)

/* ---------- Grasshopper window ---------- */

const GhWindow = styled.section`
	position: absolute;
	top: 0;
	right: 7px;
	bottom: 3px;
	left: 50.9%;
	display: flex;
	flex-direction: column;
	border: 1px solid #6d6d6d;
	background: #f0f0f0;
	box-shadow: 0 2px 12px rgba(0, 0, 0, .45);
`

const GhTitle = styled.header`
	display: flex;
	align-items: center;
	height: 30px;
	padding-left: 8px;
	background: #fff;
`

const WindowButtons = styled.div`
	display: flex;
	margin-left: auto;

	button {
		display: flex;
		align-items: center;
		justify-content: center;
		width: 46px;
		height: 30px;
	}
`

const GhMenu = styled.nav`
	display: flex;
	gap: 20px;
	height: 27px;
	padding: 0 10px 0 13px;
	background: linear-gradient(90deg, #f0f0f0, #fafafa);

	span {
		margin: auto 0 auto auto;
	}
`

const GhTabs = styled.div`
	display: flex;
	align-items: flex-end;
	height: 23px;
	margin-bottom: -1px;
	font-family: ${ classic };
	color: #777;
`

const GhTab = styled.button`
	height: ${ props => props.$active ? 23 : 20 }px;
	padding: 0 9px 0 8px;
	${ props => props.$active && css`
		border: 1px solid #8d8d8d;
		border-bottom: 0;
		border-radius: 6px 6px 0 0;
		background: #f0f0f0;
		color: #000;
	` }
`

const Ribbon = styled.div`
	display: flex;
	align-items: flex-start;
	gap: 4px;
	height: 89px;
	padding: 2px 2px 0;
	border: solid #9b9b9b;
	border-width: 1px 0 2px;
	border-radius: 6px 6px 0 0;
	background: linear-gradient(#cfcfcf, #f2f2f2);
	overflow: hidden;
`

const Group = styled.section`
	display: flex;
	flex: none;
	flex-direction: column;
	width: ${ props => props.$wide ? 60 : 32 }px;
	border: 1px solid #8b8b8b;
	border-radius: 4px;
	overflow: hidden;
	background: linear-gradient(90deg, #d2d2d2, #e9e9e9);

	h2 {
		height: 14px;
		margin: 0;
		background: #222;
		color: #fff;
		font: 10px/12px ${ classic };
		text-align: center;
		white-space: nowrap;
	}
`

const GroupIcons = styled.div`
	display: grid;
	grid-auto-flow: column;
	grid-template-rows: repeat(${ props => props.$rows }, 28px);
	grid-auto-columns: 28px;
	justify-content: center;
	padding: 1px 0;

	button {
		display: grid;
		place-items: center;
	}
`

const GhToolbar = styled.div`
	display: flex;
	align-items: center;
	height: 31px;
	padding-left: 1px;
	background: linear-gradient(#fff, #f1f1f1);
`

const GhTool = styled.button`
	display: flex;
	align-items: center;
	justify-content: center;
	width: 28px;
	height: 28px;
	border: 1px solid ${ props => props.$on ? "#0078d7" : "transparent" };
`

const Caret = styled.button`
	width: 12px;
	height: 20px;

	&::after {
		content: "";
		display: block;
		width: 0;
		margin: 4px auto 0;
		border: 3px solid transparent;
		border-top-color: #000;
	}
`

const Divider = styled.span`
	width: 1px;
	height: 21px;
	margin: 0 ${ props => props.$gap }px;
	background: #bbb;
`

const ZoomSelect = styled.span`
	position: relative;
	margin-right: 3px;

	select {
		appearance: none;
		width: 136px;
		height: 23px;
		padding: 0 3px;
		border: 1px solid #7a7a7a;
		border-radius: 0;
		background: #fff;
	}

	svg {
		position: absolute;
		top: 8px;
		right: 4px;
	}
`

const Spacer = styled.span`
	flex: 1;
`

const GhCanvas = styled.div`
	position: relative;
	display: flex;
	flex: 1;
	min-height: 0;
	margin: 0 1px;
	padding: 10px 0 0 10px;
	background: repeating-linear-gradient(115deg, #8d8b83 0 2px, #98968e 2px 4px);
	overflow: hidden;
`

const Paper = styled.div`
	flex: 1;
	border: solid #000;
	border-width: 1px 0 0 1px;
	background-color: #d4d0c8;
	background-image: linear-gradient(90deg, transparent 149px, #bab7b0 149px), linear-gradient(transparent 49px, #bcb9b2 49px);
	background-size: 150px 50px;
`

const Nodes = styled.svg`
	position: absolute;
	top: 70px;
	left: 111px;
	width: 190px;
	height: 76px;
`

const Compass = styled.svg`
	position: absolute;
	right: 8px;
	bottom: 6px;
	width: 50px;
	height: 46px;
`

const PythonChip = styled.button`
	position: absolute;
	bottom: 0;
	left: 0;
	width: 35px;
	height: 28px;
	padding-left: 2px;
	border: 1px solid #111;
	background: linear-gradient(90deg, #eee 0, #b5b5b5 80%, #777 82%, #aaa);
`

const GhStatus = styled.footer`
	display: flex;
	align-items: center;
	gap: 3px;
	height: 24px;
	padding: 0 2px 0 4px;
	border-top: 2px solid #fff;
	font-family: ${ wide };

	span {
		margin-left: auto;
		margin-right: 15px;
		color: #777;
		font-family: ${ ui };
	}
`

const ghMenus = [ "File", "Edit", "View", "Display", "Solution", "Help" ]
const ghTabs = [ "Params", "Maths", "Sets", "Vector", "Curve", "Srf", "Msh", "Int", "Trns", "Dis", "HB", "Ladybug", "Kangaroo2", "HB-Legacy" ]
const groups = [
	{ label: "00 |...", icons: [ "help", "bee" ] },
	{ label: "01 |...", icons: [ "down", "side" ] },
	{ label: "02 | Daylig...", wide: true, icons: [ "cb", "cm", "cie", "eyeBlue" ] },
	{ label: "03 | Daylig...", wide: true, icons: [ "ann", "df", "dots", "grd" ] },
	{ label: "04 |...", icons: [ "eyeRed", "heat" ] },
	{ label: "05 |...", icons: [ "sheetTop", "blocks" ] },
	{ label: "06 | Energ...", wide: true, icons: [ "slabTan", "slabBlue", "wallAsk" ] },
	{ label: "07 | Energ...", wide: true, icons: [ "calA", "clockDown", "clockNum", "calD" ] },
	{ label: "08 | Energ...", wide: true, icons: [ "dialPlus", "clockPlus", "wallPlus", "allPlus" ] },
	{ label: "09 |...", icons: [ "cycle", "sheetLow" ] },
	{ label: "10 |...", icons: [ "ePlus", "openStudio" ] },
	{ label: "11 |...", icons: [ "glass", "therm" ] },
	{ label: "12 |...", icons: [ "beeRing" ] },
	{ label: "13 |...", icons: [ "graph", "idf" ] },
]

const Grasshopper = () => (
	<GhWindow>
		<GhTitle>
			Grasshopper - unnamed
			<WindowButtons>
				<button aria-label="Minimize"><svg width="11" height="11"><path d="M0 5.500h11" stroke="#000" /></svg></button>
				<button aria-label="Maximize"><svg width="11" height="11"><path d="M.5.500h10v10H.5z" fill="none" stroke="#000" /></svg></button>
				<button aria-label="Close"><svg width="11" height="11"><path d="M.5.500l10 10M10.500.500l-10 10" stroke="#000" /></svg></button>
			</WindowButtons>
		</GhTitle>
		<GhMenu>{ ghMenus.map( m => <button key={ m }>{ m }</button> ) }<span>unnamed</span></GhMenu>
		<GhTabs>{ ghTabs.map( t => <GhTab key={ t } $active={ t === "HB" }>{ t }</GhTab> ) }</GhTabs>
		<Ribbon>
			{ groups.map( g => (
				<Group key={ g.label } $wide={ g.wide }>
					<GroupIcons $rows={ g.icons.length > 1 ? 2 : 1 }>
						{ g.icons.map( name => <button key={ name } aria-label={ name }><Icon name={ name } size={ 24 } /></button> ) }
					</GroupIcons>
					<h2>{ g.label }</h2>
				</Group>
			) ) }
		</Ribbon>
		<GhToolbar>
			<GhTool aria-label="Open"><Icon name="ghOpen" /></GhTool>
			<GhTool aria-label="Save"><Icon name="ghSave" /></GhTool>
			<Divider $gap={ 6 } />
			<ZoomSelect>
				<select aria-label="Zoom"><option>100%</option></select>
				<svg width="10" height="8"><path d="M1 2l4 4 4-4" fill="none" stroke="#444" /></svg>
			</ZoomSelect>
			<GhTool aria-label="Zoom extents"><Icon name="extents" /></GhTool><Caret aria-label="Zoom options" />
			<GhTool aria-label="Named views"><Icon name="eyeGh" /></GhTool><Caret aria-label="View options" />
			<GhTool aria-label="Sketch"><Icon name="sketch" /></GhTool>
			<Spacer />
			<GhTool aria-label="No preview"><Icon name="hidden" /></GhTool>
			<GhTool aria-label="Wireframe preview"><Icon name="wire" /></GhTool>
			<GhTool aria-label="Shaded preview" $on><Icon name="shaded" /></GhTool>
			<Divider $gap={ 7 } />
			<GhTool aria-label="Selected only"><Icon name="selected" /></GhTool>
			<GhTool aria-label="Document preview"><Icon name="half" /></GhTool>
			<Divider $gap={ 1 } />
			<GhTool aria-label="Mesh quality"><Icon name="octagon" size={ 20 } /></GhTool><Caret aria-label="Quality options" />
		</GhToolbar>
		<GhCanvas>
			<Paper />
			<Nodes aria-hidden="true">
				<defs>
					<linearGradient id="amber" x2="0" y2="1"><stop stopColor="#fff3bd" /><stop offset="1" stopColor="#f0b01c" /></linearGradient>
					<linearGradient id="orange" x2="0" y2="1"><stop stopColor="#ffd9a3" /><stop offset=".45" stopColor="#ffa53c" /><stop offset=".5" stopColor="#ff941c" /><stop offset="1" stopColor="#ff9a22" /></linearGradient>
				</defs>
				<rect x="12" y="20" width="120" height="54" rx="3" fill="#4f0a00" />
				<circle cx="6" cy="30" r="4" fill="#fff" stroke="#000" strokeWidth="2" />
				<rect x="6.500" y="16.500" width="130" height="28" rx="4" fill="url(#orange)" stroke="#4f0a00" />
				<text x="12" y="33" fontFamily="Open Sans" fontSize="11">default</text>
				<rect x="166.500" y="1.500" width="17" height="16" rx="3" fill="url(#amber)" stroke="#8f6d14" />
			</Nodes>
			<Compass aria-hidden="true">
				<radialGradient id="dome"><stop stopColor="#f4f4f4" /><stop offset="1" stopColor="#b9b9b9" /></radialGradient>
				<path d="M1 4l8 0 5 6-2 3-7-1z" />
				<circle cx="27" cy="23" r="19" fill="url(#dome)" stroke="#fff" strokeWidth="2" />
				<circle cx="27" cy="23" r="20" fill="none" stroke="#444" />
				<path d="M12 12l4 5 1-6zM35 7l6 5-5 1zM41 33l1-6-6 6zM15 38l2-7 3 6z" fill="#fff" />
			</Compass>
			<PythonChip aria-label="Python"><Icon name="python" size={ 24 } /></PythonChip>
		</GhCanvas>
		<GhStatus>
			<Icon name="info" size={ 16 } />Solution completed in ~2.6 seconds (12 seconds ago)
			<span>1.0.0007</span>
			<svg width="11" height="11" fill="#aaa"><path d="M8 0h2v2H8zM4 4h2v2H4zM8 4h2v2H8zM0 8h2v2H0zM4 8h2v2H4zM8 8h2v2H8z" /></svg>
		</GhStatus>
	</GhWindow>
)

const Balloon = styled.aside`
	position: absolute;
	top: 278px;
	right: 0;
	left: 62.4%;
	display: flex;
	height: 68px;
	border: 1px solid #767676;
	background: #fff;
	box-shadow: 3px 3px 3px rgba(0, 0, 0, .35);
	font-family: ${ wide };
	white-space: nowrap;

	> div {
		display: flex;
		align-items: center;
		width: 24px;
		margin: 1px 10px 1px 1px;
		padding-left: 3px;
		background: linear-gradient(90deg, #fff, #eee);
	}

	p {
		margin: 2px 0 0;
	}
`

const Watermark = styled.div`
	position: absolute;
	right: 63px;
	bottom: 32px;
	color: rgba(120, 118, 114, .4);
	font-size: 14px;
	line-height: 22px;
	pointer-events: none;

	strong {
		display: block;
		font-size: 19px;
		font-weight: 400;
		line-height: 24px;
	}
`

/* ---------- taskbar ---------- */

const Taskbar = styled.footer`
	display: flex;
	flex: none;
	height: 40px;
	background: #3b3b3a;
	color: #fff;
`

const StartButton = styled.button`
	display: grid;
	place-items: center;
	width: 48px;
`

const SearchBox = styled.label`
	display: flex;
	align-items: center;
	gap: 9px;
	width: 344px;
	margin-right: 3px;
	padding-left: 12px;
	border: 1px solid #ccc;
	background: #f2f2f2;

	input {
		flex: 1;
		min-width: 0;
		border: 0;
		outline: 0;
		background: none;
		font-size: 14px;
		color: #333;
	}

	input::placeholder {
		color: #333;
		opacity: 1;
	}
`

const Apps = styled.div`
	display: flex;
	gap: 1px;
`

const AppButton = styled.button`
	display: grid;
	place-items: center;
	position: relative;
	width: 48px;
	background: ${ props => props.$state === "active" ? "#666" : "none" };

	${ props => props.$state && css`
		&::after {
			content: "";
			position: absolute;
			right: ${ props.$state === "active" ? 0 : 4 }px;
			bottom: 0;
			left: ${ props.$state === "active" ? 0 : 4 }px;
			height: 2px;
			background: #76b9ed;
		}
	` }
`

const Tray = styled.div`
	display: flex;
	align-items: center;
	gap: 10px;
	margin-right: 4px;
	margin-left: auto;
	padding-right: 4px;
	border-right: 1px solid #777;
`

const ClockText = styled.time`
	width: 58px;
	line-height: 18px;
	text-align: center;
	white-space: nowrap;
`

const Notices = styled.button`
	position: relative;
	width: 36px;
	height: 30px;
	padding: 3px 0 0 6px;

	span {
		position: absolute;
		right: 5px;
		bottom: 0;
		width: 16px;
		height: 16px;
		border: 1px solid #999;
		border-radius: 8px;
		background: #3b3b3a;
		line-height: 14px;
	}
`

const apps = [
	[ "edge" ], [ "files" ], [ "mail" ], [ "team" ], [ "autocad" ], [ "chrome", "open" ], [ "store" ], [ "player", "open" ], [ "rhino", "active" ],
]

const App = () => (
	<Screen>
		<GlobalStyle />
		<Desktop>
			<Rhino />
			<Grasshopper />
			<Balloon role="alert">
				<div><Icon name="bubble" size={ 17 } /></div>
				<p>
					1. Failed to load EP constructions! You won't be able to run analysis with Honeybee!<br />
					Download the files from address below and copy them to: c:\ladybug\<br />
					https://github.com/mostaphaRoudsari/Honeybee/tree/master/resources
				</p>
			</Balloon>
			<Watermark><strong>Activate Windows</strong>Go to Settings to activate Windows.</Watermark>
		</Desktop>
		<Taskbar>
			<StartButton aria-label="Start"><Icon name="windows" size={ 16 } /></StartButton>
			<SearchBox><Icon name="search" size={ 16 } /><input type="text" placeholder="Type here to search" aria-label="Search" /></SearchBox>
			<Apps>{ apps.map( ( [ name, state ] ) => <AppButton key={ name } aria-label={ name } $state={ state }><Icon name={ name } size={ 24 } /></AppButton> ) }</Apps>
			<Tray>
				<Icon name="chevronUp" size={ 12 } />
				<Icon name="battery" size={ 17 } />
				<span>ENG</span>
				<ClockText>06:42 ق.ظ<br />۱۳۹۹/۰۱/۳۰</ClockText>
				<Notices aria-label="Notifications"><Icon name="notice" size={ 18 } /><span>۳</span></Notices>
			</Tray>
		</Taskbar>
	</Screen>
)

export default App
